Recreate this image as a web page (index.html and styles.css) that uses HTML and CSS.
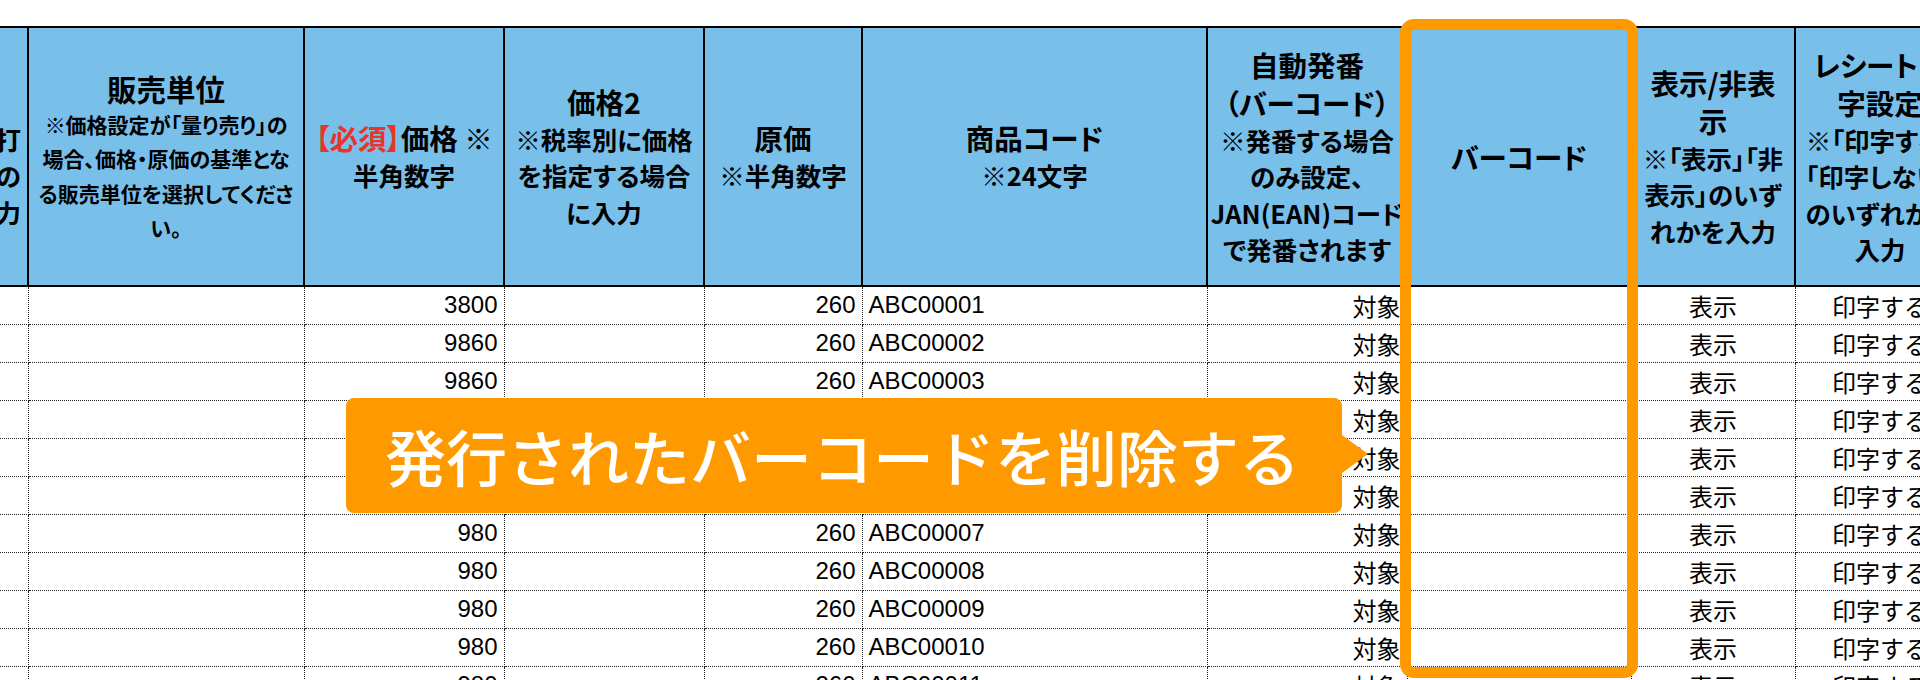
FILE: index.html
```html
<!DOCTYPE html>
<html lang="ja">
<head>
<meta charset="utf-8">
<title>商品一覧</title>
<link rel="stylesheet" href="styles.css">
</head>
<body>
<div class="sheet">
  <table class="grid">
    <colgroup>
      <col class="c-a"><col class="c-b"><col class="c-c"><col class="c-d"><col class="c-e">
      <col class="c-f"><col class="c-g"><col class="c-h"><col class="c-i"><col class="c-j">
    </colgroup>
    <thead>
      <tr class="head">
        <th class="cut"><div class="t blank">部門</div><div class="s right">※レシート打<br>刻する場合の<br>み入力</div></th>
        <th><div class="t big">販売単位</div><div class="s small">※価格設定が「量り売り」の<br>場合、価格・原価の基準とな<br>る販売単位を選択してくださ<br>い。</div></th>
        <th><div class="t"><span class="req">【必須】</span>価格 ※</div><div class="s">半角数字</div></th>
        <th><div class="t">価格2</div><div class="s">※税率別に価格<br>を指定する場合<br>に入力</div></th>
        <th><div class="t">原価</div><div class="s">※半角数字</div></th>
        <th><div class="t">商品コード</div><div class="s">※24文字</div></th>
        <th><div class="t">自動発番<br>（バーコード）</div><div class="s">※発番する場合<br>のみ設定、<br>JAN(EAN)コード<br>で発番されます</div></th>
        <th><div class="t">バーコード</div></th>
        <th><div class="t">表示/非表<br>示</div><div class="s">※「表示」「非<br>表示」のいず<br>れかを入力</div></th>
        <th><div class="t">レシート印<br>字設定</div><div class="s">※「印字する」<br>「印字しない」<br>のいずれかを<br>入力</div></th>
      </tr>
    </thead>
    <tbody>
      <tr><td></td><td></td><td class="num">3800</td><td></td><td class="num">260</td><td>ABC00001</td><td class="num">対象</td><td></td><td class="mid">表示</td><td class="mid">印字する</td></tr>
      <tr><td></td><td></td><td class="num">9860</td><td></td><td class="num">260</td><td>ABC00002</td><td class="num">対象</td><td></td><td class="mid">表示</td><td class="mid">印字する</td></tr>
      <tr><td></td><td></td><td class="num">9860</td><td></td><td class="num">260</td><td>ABC00003</td><td class="num">対象</td><td></td><td class="mid">表示</td><td class="mid">印字する</td></tr>
      <tr><td></td><td></td><td class="num">980</td><td></td><td class="num">260</td><td>ABC00004</td><td class="num">対象</td><td></td><td class="mid">表示</td><td class="mid">印字する</td></tr>
      <tr><td></td><td></td><td class="num">980</td><td></td><td class="num">260</td><td>ABC00005</td><td class="num">対象</td><td></td><td class="mid">表示</td><td class="mid">印字する</td></tr>
      <tr><td></td><td></td><td class="num">980</td><td></td><td class="num">260</td><td>ABC00006</td><td class="num">対象</td><td></td><td class="mid">表示</td><td class="mid">印字する</td></tr>
      <tr><td></td><td></td><td class="num">980</td><td></td><td class="num">260</td><td>ABC00007</td><td class="num">対象</td><td></td><td class="mid">表示</td><td class="mid">印字する</td></tr>
      <tr><td></td><td></td><td class="num">980</td><td></td><td class="num">260</td><td>ABC00008</td><td class="num">対象</td><td></td><td class="mid">表示</td><td class="mid">印字する</td></tr>
      <tr><td></td><td></td><td class="num">980</td><td></td><td class="num">260</td><td>ABC00009</td><td class="num">対象</td><td></td><td class="mid">表示</td><td class="mid">印字する</td></tr>
      <tr><td></td><td></td><td class="num">980</td><td></td><td class="num">260</td><td>ABC00010</td><td class="num">対象</td><td></td><td class="mid">表示</td><td class="mid">印字する</td></tr>
      <tr><td></td><td></td><td class="num">980</td><td></td><td class="num">260</td><td>ABC00011</td><td class="num">対象</td><td></td><td class="mid">表示</td><td class="mid">印字する</td></tr>
    </tbody>
  </table>
  <div class="highlight"></div>
  <div class="callout">発行されたバーコードを削除する</div>
</div>
</body>
</html>
```

FILE: styles.css
```css
html, body {
  margin: 0;
  padding: 0;
  background: #ffffff;
}

.sheet {
  position: relative;
  width: 1920px;
  height: 680px;
  overflow: hidden;
  padding-top: 26px;
  box-sizing: border-box;
}

.grid {
  border-collapse: collapse;
  table-layout: fixed;
  width: 2137px;
  margin-left: -173px;
}

.c-a { width: 200px; }
.c-b { width: 276px; }
.c-c { width: 200px; }
.c-d { width: 200px; }
.c-e { width: 158px; }
.c-f { width: 345px; }
.c-g { width: 200px; }
.c-h { width: 224px; }
.c-i { width: 164px; }
.c-j { width: 170px; }

.head { height: 259px; }

.grid th {
  background: #78bfea;
  border: 2px solid #000;
  color: #000;
  font-family: "Noto Sans CJK JP", sans-serif;
  font-weight: 700;
  font-feature-settings: "palt" 1;
  text-align: center;
  vertical-align: middle;
  padding: 0 2px;
  white-space: nowrap;
  overflow: hidden;
}

.t {
  font-size: 28.5px;
  line-height: 38px;
}

.t.big {
  font-size: 29.5px;
}

.t.blank {
  color: transparent;
}

.s {
  font-size: 25.5px;
  line-height: 36.5px;
}

.s.small {
  font-size: 21px;
  line-height: 34.5px;
}

.s.right {
  text-align: right;
  padding-right: 4px;
}

.req {
  color: #e8352a;
}

.grid tbody tr { height: 38px; }

.grid td {
  border: 1px dotted #222;
  padding: 0 6px;
  font-family: "Liberation Sans", "Noto Sans CJK JP", sans-serif;
  font-size: 24px;
  color: #000;
  white-space: nowrap;
  overflow: hidden;
  vertical-align: middle;
}

.grid td.num { text-align: right; }
.grid td.mid { text-align: center; }

.highlight {
  position: absolute;
  left: 1400px;
  top: 19px;
  width: 238px;
  height: 659px;
  box-sizing: border-box;
  border: 11px solid #ff9900;
  border-radius: 14px;
}

.callout {
  position: absolute;
  left: 346px;
  top: 398px;
  width: 996px;
  height: 115px;
  box-sizing: border-box;
  padding-left: 39px;
  display: flex;
  align-items: center;
  background: #ff9900;
  border-radius: 8px;
  color: #ffffff;
  font-family: "Noto Sans CJK JP", sans-serif;
  font-weight: 500;
  font-size: 61px;
  white-space: nowrap;
}

.callout::after {
  content: "";
  position: absolute;
  right: -26px;
  top: 37px;
  border-left: 26px solid #ff9900;
  border-top: 19px solid transparent;
  border-bottom: 19px solid transparent;
}
```
